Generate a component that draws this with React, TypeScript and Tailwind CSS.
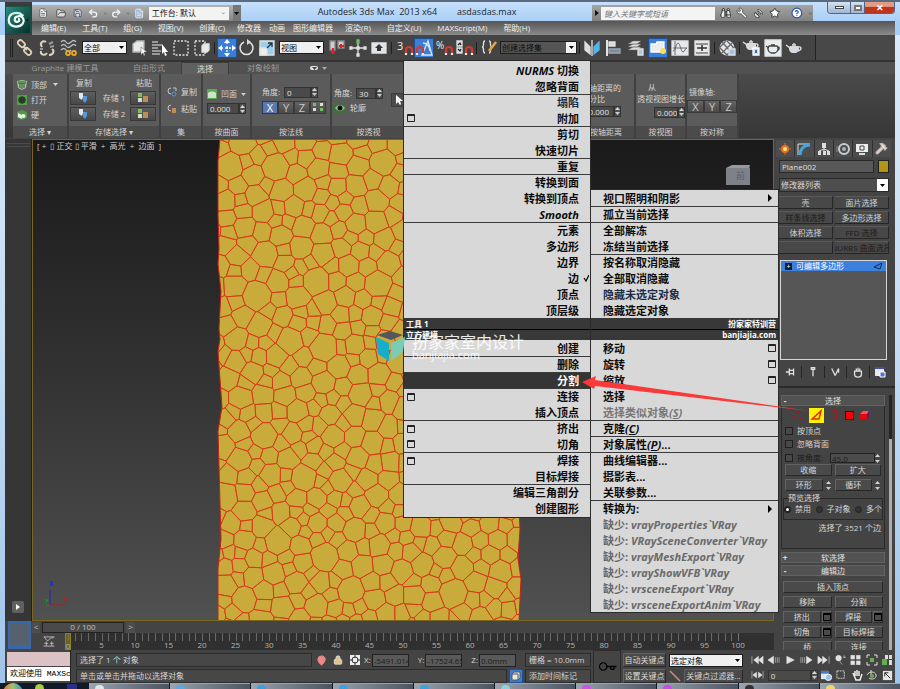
import type { ReactNode } from 'react';
import {
  Binoculars,
  ChevronDown,
  CircleHelp,
  FileText,
  FolderOpen,
  Hammer,
  Key,
  Lock,
  MapPin,
  Redo2,
  Save,
  SatelliteDish,
  Star,
  Undo2,
  Wrench,
} from 'lucide-react';

export default function App() {
  return (
    <div className="relative flex min-h-screen w-full flex-col overflow-hidden bg-linear-to-b from-[#dcebfa] via-[#c5dcf3] to-[#9fc4ea] px-[5px] font-['Open_Sans','Noto_Sans_CJK_SC',sans-serif] text-[8px] leading-none text-[#d6d6d6]">
      <Header />
      <MainToolbar />
      <Ribbon />
      <div className="flex flex-1 bg-[#444444]">
        <div className="flex min-w-0 flex-1 flex-col">
          <div className="flex flex-1">
            <aside className="flex w-[27px] flex-col items-center justify-end border-r border-[#222] bg-[#363636] pb-2">
              <div className="mt-1 mb-auto h-1 w-[23px] border-y border-[#4c4c4c]" />
              <button aria-label="展开" className="flex h-[12px] w-[12px] items-center justify-center rounded-xs bg-[#606060]">
                <svg viewBox="0 0 6 6" className="h-[6px] w-[6px]"><path d="M1 0l4 3-4 3z" fill="#fff" /></svg>
              </button>
            </aside>
            <Viewport />
          </div>
          <TrackBar />
        </div>
        <CommandPanel />
      </div>
      <StatusBar />
      <Taskbar />
      <QuadMenu />
      <Arrow />
    </div>
  );
}

/* ---------- title bar and menus ---------- */

const menus = [
  { label: '编辑(E)', wide: true },
  { label: '工具(T)', wide: true },
  { label: '组(G)', wide: true },
  { label: '视图(V)', wide: true },
  { label: '创建(C)', wide: true },
  { label: '修改器', wide: false },
  { label: '动画', wide: false },
  { label: '图形编辑器', wide: false },
  { label: '渲染(R)', wide: true },
  { label: '自定义(U)', wide: true },
  { label: 'MAXScript(M)', wide: true },
  { label: '帮助(H)', wide: true },
];

function Header() {
  return (
    <header className="-mx-[5px] flex h-[35px] border-t-2 border-[#5a6b80] bg-linear-to-b from-[#c6dffa] to-[#a9cef6] to-60% pl-[5px]">
      <div className="flex w-[27px] flex-col justify-end bg-[#3c3c3c] pb-px">
        <button aria-label="应用程序" className="relative h-[28px] w-[26px] border border-[#1d4f49] bg-linear-to-br from-[#2b8f80] to-[#07302c]">
          <svg viewBox="0 0 26 28" className="h-full w-full" fill="none">
            <path d="M18 9C13 4 3 6 3 14c0 8 11 9 15 4 3-5-1-9-5-8-4 0-5 6-1 6 2 0 3-1 2-3" stroke="#eefaf7" strokeWidth="2.4" strokeLinecap="round" />
            <path d="M6 9c4-4 10-4 13 0" stroke="#a4ded2" strokeWidth="1" />
            <path d="M21 13h4l-2 3z" fill="#05211e" />
          </svg>
        </button>
      </div>
      <div className="flex min-w-0 flex-1 flex-col">
        <div className="flex h-[19px] items-end text-[#222]">
          <div className="flex h-[16px] w-[209px] items-center gap-1 bg-linear-to-b from-[#b2b2b2] to-[#868686] pl-[6px] text-[#f5f5f5]">
            <FileText className="h-[10px] w-[11px] fill-white text-[#555]" />
            <FolderOpen className="ml-[4px] h-[11px] w-[11px] fill-[#ddd] text-[#444]" />
            <Save className="ml-[2px] h-[10px] w-[10px] fill-[#ddd] text-[#344d77]" />
            <Undo2 className="ml-[2px] h-[11px] w-[11px]" strokeWidth={3} />
            <ChevronDown className="h-[5px] w-[5px] text-[#333]" />
            <Redo2 className="h-[11px] w-[11px]" strokeWidth={3} />
            <ChevronDown className="h-[5px] w-[5px] text-[#333]" />
            <FileText className="h-[11px] w-[11px] fill-[#9cb5d8] text-[#eee]" />
            <label className="ml-auto flex h-[13px] w-[84px] items-center bg-[#f3f3f3] px-[3px] text-[#111]">
              <select aria-label="工作台" className="w-full appearance-none bg-transparent">
                <option>工作台: 默认</option>
              </select>
              <ChevronDown className="h-[5px] w-[5px]" />
            </label>
            <div className="flex h-full w-[9px] items-center justify-center bg-[#777]"><Caret className="text-black" /></div>
          </div>
          <div className="flex flex-1 justify-center gap-[20px] self-center whitespace-pre pl-[1px] text-[9px] text-[#1b2733]">
            <span>Autodesk 3ds Max  2013 x64</span>
            <span>asdasdas.max</span>
          </div>
          <div className="flex h-[16px] w-[221px] items-center gap-[5px] bg-linear-to-b from-[#a4a4a4] to-[#828282] pl-[3px] text-[#f6f6f6]">
            <svg viewBox="0 0 4 6" className="mr-[-3px] h-[6px] w-[4px]"><path d="M0 0l4 3-4 3z" fill="#111" /></svg>
            <input aria-label="搜索" placeholder="键入关键字或短语" className="h-[13px] w-[117px] bg-[#f4f4f4] pl-[3px] italic placeholder:text-[#777]" />
            <Binoculars className="h-[12px] w-[12px] text-[#333]" fill="#eee" />
            <Wrench className="h-[12px] w-[12px] -scale-x-100 fill-white text-[#555]" />
            <SatelliteDish className="h-[11px] w-[11px] fill-white text-[#333]" />
            <Star className="h-[12px] w-[12px] fill-white text-[#333]" />
            <CircleHelp className="ml-[6px] h-[12px] w-[12px] fill-white text-[#2c55a8]" strokeWidth={2.5} />
            <ChevronDown className="h-[5px] w-[5px] text-[#222]" />
          </div>
          <div className="ml-[14px] mr-[5px] flex h-[12px] self-start overflow-hidden rounded-b-sm border border-t-0 border-[#51657f]">
            <button aria-label="最小化" className="flex w-[23px] items-center justify-center border-r border-[#51657f] bg-linear-to-b from-[#d5e2f0] to-[#9fb7d2]">
              <span className="h-[3px] w-[9px] border border-[#444] bg-white" />
            </button>
            <button aria-label="还原" className="flex w-[14px] items-center justify-center border-r border-[#51657f] bg-linear-to-b from-[#d5e2f0] to-[#9fb7d2]">
              <span className="h-[6px] w-[8px] border-2 border-[#777] bg-white" />
            </button>
            <button aria-label="关闭" className="flex w-[29px] items-center justify-center bg-linear-to-b from-[#e39a86] from-40% to-[#c0341b] to-50% text-[9px] font-bold text-white">
              ✕
            </button>
          </div>
        </div>
        <nav className="mr-[5px] flex h-[14px] items-center bg-linear-to-b from-[#555] to-[#8b8b8b] pl-px text-[#f0f0f0]">
          {menus.map((m) => (
            <button key={m.label} className={m.wide ? 'px-2 whitespace-nowrap' : 'px-1 whitespace-nowrap'}>
              {m.label}
            </button>
          ))}
        </nav>
      </div>
    </header>
  );
}

function Caret({ className = 'text-[#ccc]' }: { className?: string }) {
  return (
    <svg viewBox="0 0 5 3" className={`h-[3px] w-[5px] shrink-0 ${className}`}>
      <path d="M0 0h5L2.5 3z" fill="currentColor" />
    </svg>
  );
}

/* ---------- main toolbar ---------- */

function Tool({ label, active, children }: { label: string; active?: boolean; children: ReactNode }) {
  return (
    <button
      aria-label={label}
      className={
        active
          ? 'flex h-[20px] w-[20px] shrink-0 items-center justify-center border border-[#1f4f8d] bg-[#3b7ed6]'
          : 'flex h-[20px] w-[20px] shrink-0 items-center justify-center'
      }
    >
      <svg viewBox="0 0 18 18" className="h-[18px] w-[18px] overflow-visible" fill="none" stroke="#e2e2e2" strokeWidth="1.3">
        {children}
      </svg>
    </button>
  );
}

function Divider() {
  return <div className="mx-[2px] h-[12px] w-px shrink-0 bg-[#1f1f1f]" />;
}

function Magnet() {
  return (
    <g strokeWidth="2.2">
      <path d="M11 14v-3a3 3 0 016 0v3" stroke="#cf3b32" />
      <path d="M11 14v2M17 14v2" stroke="#f0f0f0" />
    </g>
  );
}

function Teapot() {
  return (
    <>
      <path d="M5 7h8c2 2 1 6-2 7H7C4 13 3 9 5 7z" fill="#d5dbe0" stroke="none" />
      <path d="M5 9L1 6M13 8c4-1 4 3 0 4M7 6h4M9 4v2" />
    </>
  );
}

function MainToolbar() {
  return (
    <div className="flex h-[25px] items-center bg-[#444] pl-[5px]">
      <div className="mr-[2px] h-[18px] w-[3px] border-x border-[#222]" />
      <div className="flex gap-[2px]">
        <Tool label="选择并链接">
          <rect x="1" y="2" width="8" height="5" rx="2.5" transform="rotate(45 5 5)" stroke="#ddd3b8" strokeWidth="1.8" />
          <rect x="8" y="10" width="8" height="5" rx="2.5" transform="rotate(45 12 12)" stroke="#ddd3b8" strokeWidth="1.8" />
          <path d="M7 7l4 4" stroke="#ddd3b8" strokeWidth="2" />
        </Tool>
        <Tool label="取消链接">
          <path d="M8 3C5 1 1 4 4 8M3 12c-1 4 4 5 6 2M14 10c3 2 1 6-3 6" stroke="#ddd3b8" strokeWidth="2" />
          <path d="M11 5l4-2M12 8l4-1M2 10h3" stroke="#999" strokeWidth="2" />
        </Tool>
        <Tool label="绑定到空间扭曲">
          <path d="M1 3q3-3 5 0t5 0 5 0M1 7q3-3 5 0t5 0 5 0M1 11q3-3 5 0t5 0" stroke="#b9bfc2" />
          <path d="M6 14a2 2 0 104 0 2 2 0 10-4 0M12 14a2 2 0 104 0 2 2 0 10-4 0" stroke="#e5ac21" strokeWidth="1.8" />
        </Tool>
      </div>
      <Combo label="选择过滤器" value="全部" className="ml-[3px] w-[45px]" />
      <div className="ml-[2px] flex gap-[1px]">
        <Tool label="选择对象">
          <path d="M3 5l4-3h7v8l-4 3H3z" fill="#e8e8e8" stroke="#aeb9be" />
          <path d="M11 8v8l2-2 1 3 1-1-1-3h3z" fill="#fff" stroke="#555" strokeWidth=".5" />
        </Tool>
        <Tool label="按名称选择">
          <path d="M1 3h6M1 6h10M1 9h6M1 12h9M1 15h8" stroke="#b5b5b5" />
          <path d="M11 5v10l2-2 1 4 2-1-2-3h3z" fill="#fff" stroke="none" />
        </Tool>
        <Tool label="矩形选择区域"><path d="M2 2h14v14H2z" strokeDasharray="2 1.5" /></Tool>
        <Tool label="窗口/交叉">
          <path d="M2 2h10v14H2z" strokeDasharray="2 1.5" />
          <path d="M9 7l2-2h5v6l-2 2H9z" fill="#e8e8e8" />
        </Tool>
      </div>
      <Divider />
      <Tool label="选择并移动" active>
        <path d="M9 3v12M3 9h12" stroke="#fff" strokeDasharray="2 2" />
        <path d="M9 0l3 4H6zM9 18l3-4H6zM0 9l4-3v6zM18 9l-4-3v6z" fill="#fff" stroke="none" />
        <path d="M8 8h2v2H8z" fill="#fff" stroke="none" />
      </Tool>
      <Tool label="选择并旋转">
        <path d="M11 3a6.5 6.5 0 11-5 0" strokeWidth="1.6" /><path d="M9 0v6l4-3z" fill="#ddd" stroke="none" />
      </Tool>
      <Tool label="选择并缩放">
        <path d="M2 2h14v14H2z" fill="#9dd0e8" /><path d="M2 9h7v7H2z" fill="#eee" /><path d="M9 9l5-5M10 4h4v4" stroke="#234" />
      </Tool>
      <Combo label="参考坐标系" value="视图" className="ml-[2px] w-[45px]" />
      <div className="ml-[3px] flex gap-[1px]">
        <Tool label="使用轴点中心">
          <path d="M2 2h5v9H2zM10 2h6v7h-6z" fill="#c9ced2" stroke="#888" /><path d="M5 9v6M3 13h4" stroke="#d22" strokeWidth="2" /><path d="M11 7h5M13 5v4" stroke="#d22" strokeWidth="2" />
        </Tool>
        <Tool label="选择并操纵">
          <path d="M9 3v12M3 9h12" /><path d="M8 8h2v2H8z" fill="#ddd" /><path d="M8 1h2v3H8z" fill="#6fc05e" stroke="#6fc05e" /><path d="M1 8h2v2H1zM15 8h2v2h-2zM8 15h2v2H8z" fill="#ddd" />
        </Tool>
        <Tool label="键盘快捷键覆盖">
          <path d="M2 4h14v10H2z" fill="#dfe5e8" /><path d="M9 5l4 4h-2v3H7V9H5z" fill="#333" stroke="none" />
        </Tool>
      </div>
      <Divider />
      <Tool label="捕捉开关"><text x="2" y="11" fill="#eee" stroke="none" fontSize="11">3</text><Magnet /></Tool>
      <Tool label="角度捕捉切换" active><path d="M7 16L13 2l4 14zM8 4c4 0 7 4 7 8" stroke="#d8e8ff" /><g transform="translate(-9 0)"><Magnet /></g></Tool>
      <Tool label="百分比捕捉切换"><text x="1" y="10" fill="#eee" stroke="none" fontSize="10">%</text><Magnet /></Tool>
      <Tool label="微调器捕捉切换"><path d="M2 2h5v5H2zM2 9h5v5H2z" fill="#ddd" /><path d="M3 6l2-2 1 2M3 10l2 2 1-2" stroke="#222" /><Magnet /></Tool>
      <Divider />
      <Tool label="编辑命名选择集">
        <path d="M5 2C2 2 5 8 2 8c3 0 0 6 3 6M9 2c3 0 0 6 3 6-3 0 0 6-3 6" /><path d="M9 12l7-9" stroke="#e8a33a" strokeWidth="2.5" />
      </Tool>
      <Combo label="命名选择集" value="创建选择集" className="ml-[1px] w-[77px]" dark />
      <Divider />
      <div className="flex gap-[2px]">
        <Tool label="镜像"><path d="M2 3l5 5v7l-5-4zM9 1v16" fill="#ddd" /><path d="M16 3l-5 5v7l5-4z" fill="#54b5ea" stroke="#54b5ea" /></Tool>
        <Tool label="对齐"><path d="M2 1v16" strokeWidth="2" /><path d="M4 3h6v4H4z" fill="#ddd" /><path d="M4 10h11v4H4z" fill="#7d8a9a" stroke="#9aa7b5" /></Tool>
        <Tool label="层管理器"><path d="M1 11l5-3h8l-4 3zM1 8l5-3h8l-4 3zM1 5l5-3h8l-4 3z" fill="#ddd" stroke="#666" strokeWidth=".5" /><path d="M11 10h5v6h-5z" fill="#a8c8e8" /></Tool>
        <Tool label="切换功能区" active><path d="M2 5h5l1-2h7v10H2z" fill="#e8edf2" stroke="#fff" /><circle cx="14" cy="12" r="3" fill="#ffdc5c" stroke="none" /></Tool>
        <Tool label="曲线编辑器"><path d="M1 2h16v14H1z" fill="#e5e9eb" /><path d="M2 12c3 0 3-8 5-8s3 9 5 9 2-4 4-4M4 2v14M2 9h14" stroke="#4a5154" strokeWidth=".8" /></Tool>
        <Tool label="图解视图"><path d="M2 2h14v14H2z" fill="#e5e9eb" /><path d="M3 5h12M3 14h12" stroke="#777" /><path d="M4 9h10M9 6v6M8 9h2" stroke="#333" strokeWidth="1.6" /></Tool>
      </div>
      <Divider />
      <Tool label="材质编辑器">
        <circle cx="9" cy="9" r="7.5" fill="#dfe5e8" stroke="none" /><path d="M4 3l10 11M1 8l8 8M9 2l7 7M14 4L4 14M9 16l7-8M2 8l6-6" stroke="#666" /><path d="M11 10h6v6h-6z" fill="#9dc3e5" />
      </Tool>
      <Divider />
      <div className="flex gap-[1px]">
        <Tool label="渲染设置"><g transform="translate(-1 -3)"><Teapot /></g><path d="M10 9h6v7h-6z" fill="#cde" stroke="#fff" /><path d="M12 11h2v3h-2z" fill="#3671b5" stroke="none" /></Tool>
        <Tool label="渲染帧窗口"><path d="M1 1h16v16H1z" fill="#e8ecee" /><path d="M5 7h8c2 2 1 6-2 7H7C4 13 3 9 5 7zM5 9L2 7M13 8c3-1 3 3 0 4M7 6h4" stroke="#444" /></Tool>
        <Tool label="渲染产品"><Teapot /></Tool>
      </div>
      <div className="ml-auto h-full w-[80px] border-l border-[#222] bg-[#484848]" />
    </div>
  );
}

function Combo({ label, value, className, dark }: { label: string; value: string; className: string; dark?: boolean }) {
  return (
    <div className={`flex h-[13px] shrink-0 items-center border border-[#1c1c1c] ${dark ? 'bg-[#555]' : 'bg-[#efefef]'} ${className}`}>
      <select aria-label={label} className="h-full min-w-0 flex-1 appearance-none pl-[1px] leading-[11px] text-[#0c0c0c]">
        <option>{value}</option>
      </select>
      <span className="flex h-full w-[10px] items-center justify-center bg-[#f2f2f2]"><Caret className="text-black" /></span>
    </div>
  );
}

/* ---------- ribbon ---------- */

function Spinner({ label, value, className = 'w-[36px]' }: { label: string; value: string; className?: string }) {
  return (
    <span className={`flex h-[11px] items-center ${className}`}>
      <input aria-label={label} defaultValue={value} className="h-full min-w-0 flex-1 border border-[#333] bg-[#4a4a4a] pl-[2px] text-[#e0e0e0]" />
      <span className="flex h-full w-[7px] flex-col items-center justify-center gap-[2px] border border-[#333] bg-[#505050]">
        <Caret className="rotate-180" />
        <Caret />
      </span>
    </span>
  );
}

function Group({ title, className, children }: { title: string; className: string; children?: ReactNode }) {
  return (
    <section className={`flex shrink-0 flex-col border-r-2 border-[#404040] bg-[#5b5b5b] ${className}`}>
      <div className="flex flex-1 flex-col">{children}</div>
      <h3 className="flex h-[12px] items-center justify-center gap-[5px] bg-[#4b4b4b] text-[#d2d2d2]">{title}</h3>
    </section>
  );
}

function GreenIcon({ kind }: { kind: 'top' | 'open' | 'hard' | 'concave' }) {
  return (
    <svg viewBox="0 0 10 10" className="h-[10px] w-[10px] shrink-0">
      {kind === 'top' && <><path d="M0 1l5-1 5 1-1 7-4 2-4-2z" fill="#a9bda6" /><path d="M1 1h8v3H1z" fill="#4ea045" /><path d="M3 3v5M5 3v6M7 3v5" stroke="#345431" /></>}
      {kind === 'open' && <><path d="M0 0h10v10H0z" fill="#54a04b" /><circle cx="5" cy="5" r="3.3" fill="#333" stroke="#1e4a1a" /></>}
      {kind === 'hard' && <><path d="M0 2l5-2 5 2v6l-5 2-5-2z" fill="#4e9a46" /><path d="M1 3l4 2v4L1 7z" fill="#e4eee2" /><circle cx="6.5" cy="6" r="2" fill="#f1f6f0" /></>}
      {kind === 'concave' && <><path d="M0 0h10v10H0z" fill="#57aa4d" /><path d="M1 4c2-2 6-2 8 0v5H1z" fill="#cfe3cb" /></>}
    </svg>
  );
}

function StoreButton({ label, paste }: { label: string; paste?: boolean }) {
  return (
    <button aria-label={label} className="flex h-[14px] w-[26px] items-center justify-center border border-[#383838] bg-linear-to-b from-[#5e5e5e] to-[#484848]">
      <svg viewBox="0 0 12 10" className="h-[10px] w-[12px]">
        {paste ? (
          <><path d="M1 0h4v4H1z" fill="#7fbf5c" /><path d="M1 5h4v4H1z" fill="#d2dccf" /><path d="M6 3h5v6H6z" fill="#c28a54" /></>
        ) : (
          <><path d="M2 0h4v4l-1 3-3-2z" fill="#dfe9f2" /><path d="M6 3h4v4l-2 3-2-2z" fill="#4e98db" /></>
        )}
      </svg>
    </button>
  );
}

const axisButton = 'h-[13px] flex-1 border border-[#3a3a3a] bg-linear-to-b from-[#646464] to-[#4a4a4a] text-[11px] leading-[11px] text-[#c8c8c8]';

function Ribbon() {
  return (
    <div className="border-t-2 border-[#333] bg-[#444] pb-px">
      <div role="tablist" className="flex h-[12px] items-center bg-[#515151] text-[#9c9c9c]">
        <button role="tab" className="ml-[7px] w-[106px]">Graphite 建模工具</button>
        <button role="tab" className="ml-[4px] w-[54px]">自由形式</button>
        <button role="tab" aria-selected="true" className="ml-[5px] h-full w-[48px] border border-b-0 border-[#3d3d3d] bg-[#606060] text-[#dcdcdc]">选择</button>
        <button role="tab" className="w-[68px]">对象绘制</button>
        <span className="ml-[13px] flex h-[4px] w-[8px] items-center justify-center rounded-xs bg-[#e5e5e5] text-[#333]"><Caret className="text-[#444]" /></span>
        <Caret className="ml-[4px] text-[#aaa]" />
      </div>
      <div className="flex h-[64px] bg-linear-to-b from-[#4a4a4a] to-[#373737] pl-[8px]">
        <Group title="选择 ▾" className="w-[56px]">
          <div className="flex flex-1 flex-col justify-around py-[3px] pl-[4px]">
            <span className="flex items-center gap-[4px]"><GreenIcon kind="top" />顶部<Caret className="ml-[2px]" /></span>
            <span className="flex items-center gap-[4px]"><GreenIcon kind="open" />打开</span>
            <span className="flex items-center gap-[4px]"><GreenIcon kind="hard" />硬</span>
          </div>
        </Group>
        <Group title="存储选择 ▾" className="w-[92px]">
          <div className="grid flex-1 grid-cols-[28px_1fr_28px] content-center items-center gap-y-[2px] px-[1px] text-center">
            <span className="pb-[2px]">复制</span><span /><span className="pb-[2px]">粘贴</span>
            <StoreButton label="复制存储 1" /><span>存储 1</span><StoreButton label="粘贴存储 1" paste />
            <StoreButton label="复制存储 2" /><span>存储 2</span><StoreButton label="粘贴存储 2" paste />
          </div>
        </Group>
        <Group title="集" className="w-[42px]">
          <div className="flex flex-1 flex-col justify-center gap-[7px] pl-[6px]">
            <span className="flex items-center gap-[4px]">
              <svg viewBox="0 0 10 10" className="h-[10px] w-[10px]" fill="none"><path d="M4 7a3 3 0 110-6M6 1h3v3" stroke="#c9c9c9" /><circle cx="7" cy="7" r="2" stroke="#4e98db" /></svg>复制
            </span>
            <span className="flex items-center gap-[4px]">
              <svg viewBox="0 0 10 10" className="h-[10px] w-[10px]" fill="none"><path d="M4 7a3 3 0 110-6" stroke="#c9c9c9" /><path d="M5 4h4v5H5z" fill="#c28a54" /></svg>粘贴
            </span>
          </div>
        </Group>
        <Group title="按曲面" className="w-[49px]">
          <div className="flex flex-1 flex-col justify-center gap-[4px] px-[4px] pt-[3px]">
            <span className="flex items-center gap-[4px] whitespace-nowrap"><GreenIcon kind="concave" />凹面<Caret /></span>
            <Spinner label="凹面" value="0.000" className="w-[39px]" />
          </div>
        </Group>
        <Group title="按法线" className="w-[80px]">
          <div className="flex flex-1 flex-col justify-center gap-[3px] px-[10px]">
            <span className="flex items-center gap-[4px] whitespace-nowrap">角度:<Spinner label="法线角度" value="0" className="w-[34px]" /></span>
            <div className="flex w-[64px]">
              <button className="h-[13px] flex-1 border border-[#223a60] bg-[#5b79ad] text-[11px] leading-[11px] text-white">X</button>
              <button className={axisButton}>Y</button>
              <button className={axisButton}>Z</button>
              <button aria-label="反转" className={axisButton}>
                <svg viewBox="0 0 12 10" className="m-auto h-[10px] w-[12px]" fill="#ddd"><path d="M1 1h3v3H1zM8 6h3v3H8z" fill="#77c063" /><path d="M8 1h3v3H8zM1 6h3v3H1z" /></svg>
              </button>
            </div>
          </div>
        </Group>
        <Group title="按透视" className="w-[75px]">
          <div className="flex flex-1 flex-row items-center justify-between pl-[2px]">
            <div className="flex flex-col gap-[4px]">
              <span className="flex items-center gap-[4px] whitespace-nowrap">角度:<Spinner label="透视角度" value="30" className="w-[27px]" /></span>
              <span className="flex items-center gap-[4px]">
                <svg viewBox="0 0 12 10" className="h-[10px] w-[12px]"><path d="M0 0h12v10H0z" fill="#3f7038" /><path d="M1 5c3-4 7-4 10 0-3 4-7 4-10 0z" fill="#a6b8a3" /><circle cx="6" cy="5" r="2.5" fill="#111" /></svg>
                轮廓
              </span>
            </div>
            <button aria-label="选择" className="h-[14px] w-[14px] border border-[#3a3a3a] bg-[#4d4d4d]">
              <svg viewBox="0 0 12 12" className="h-[12px] w-[12px]"><path d="M4 1v9l2-2 2 3 1-1-1-3h3z" fill="#fff" /></svg>
            </button>
          </div>
        </Group>
        <Group title="按随机" className="w-[171px]" />
        <Group title="按轴距离" className="w-[58px]">
          <div className="flex flex-1 flex-col justify-center gap-[3px] whitespace-nowrap pl-[3px]">
            <span>离轴距离的</span>
            <span>百分比</span>
            <Spinner label="百分比" value="10.000" className="w-[40px]" />
          </div>
        </Group>
        <Group title="按视图" className="w-[51px]">
          <div className="flex flex-1 flex-col justify-center gap-[4px] whitespace-nowrap">
            <span className="pl-[12px]">从</span>
            <span className="pl-[1px]">透视视图增长</span>
            <Spinner label="视图增长" value="0.000" className="ml-auto w-[31px]" />
          </div>
        </Group>
        <Group title="按对称" className="w-[52px]">
          <div className="flex flex-1 flex-col justify-center gap-[4px]">
            <span className="pl-[2px]">镜像轴:</span>
            <div className="flex">
              <button className={axisButton}>X</button>
              <button className={axisButton}>Y</button>
              <button className={axisButton}>Z</button>
            </div>
          </div>
        </Group>
      </div>
    </div>
  );
}

/* ---------- viewport ---------- */

type Point = [number, number];

interface Seed {
  x: number;
  y: number;
  r: number;
}

const MESH_W = 304;
const MESH_H = 482;

function seededRandom(seed: number) {
  let s = seed;
  return () => {
    s = (s * 16807) % 2147483647;
    return s / 2147483647;
  };
}

// pack circles of falling size, the large ones first
function packSeeds(): Seed[] {
  const rand = seededRandom(3521);
  const seeds: Seed[] = [];
  for (let i = 0; i < 22000; i++) {
    const x = rand() * (MESH_W + 60) - 30;
    const y = rand() * (MESH_H + 60) - 30;
    let r = 4 + rand();
    if (i < 60) r = 11 + rand() * 2;
    else if (i < 1200) r = 8 + rand() * 2;
    else if (i < 8000) r = 6 + rand() * 2;
    if (seeds.every((p) => Math.hypot(p.x - x, p.y - y) > p.r + r)) seeds.push({ x, y, r });
  }
  return seeds;
}

// power diagram cell: clip a box by the radical line of every near neighbour
function cellOf(site: Seed, sites: Seed[]): Point[] {
  const { x, y, r } = site;
  let cell: Point[] = [[x - 30, y - 30], [x + 30, y - 30], [x + 30, y + 30], [x - 30, y + 30]];
  for (const other of sites) {
    const dx = other.x - x;
    const dy = other.y - y;
    if (other === site || Math.abs(dx) > 50 || Math.abs(dy) > 50) continue;
    const offset = (dx * dx + dy * dy + r * r - other.r * other.r) / 2;
    const side = (p: Point) => (p[0] - x) * dx + (p[1] - y) * dy - offset;
    const next: Point[] = [];
    cell.forEach((a, i) => {
      const b = cell[(i + 1) % cell.length];
      const da = side(a);
      const db = side(b);
      if (da <= 0) next.push(a);
      if (da * db < 0) {
        const t = da / (da - db);
        next.push([a[0] + (b[0] - a[0]) * t, a[1] + (b[1] - a[1]) * t]);
      }
    });
    cell = next;
  }
  return cell;
}

function relax(seeds: Seed[]): Seed[] {
  return seeds.map((s) => {
    const cell = cellOf(s, seeds);
    let area = 0;
    let cx = 0;
    let cy = 0;
    cell.forEach((a, i) => {
      const b = cell[(i + 1) % cell.length];
      const cross = a[0] * b[1] - b[0] * a[1];
      area += cross;
      cx += (a[0] + b[0]) * cross;
      cy += (a[1] + b[1]) * cross;
    });
    return area === 0 ? s : { x: cx / (3 * area), y: cy / (3 * area), r: s.r };
  });
}

const seeds = relax(relax(relax(packSeeds())));
const cells = seeds.map((s) => cellOf(s, seeds).map((p) => p.map((n) => n.toFixed(1)).join(',')).join(' '));

const MESH_OUTLINE =
  'M3 0L1 22L1 75L2 110L1 125L4 152L2 190L3 200L1 212L5 268L1 292L4 400L1 430L1 482H302L304 440L301 420L303 390L301 350V0Z';

function Viewport() {
  return (
    <main className="relative flex-1 overflow-hidden border border-[#7c651d] bg-linear-to-b from-[#1a1a1a] via-[#333] to-[#515151]">
      <span className="absolute left-[4px] top-[2px] whitespace-pre text-[#d0d0d0]">{'[ +  ▯ 正交 ▯ 平滑  +  高光  +  边面  ]'}</span>
      <svg
        viewBox={`0 0 ${MESH_W} ${MESH_H}`}
        preserveAspectRatio="xMidYMid slice"
        className="absolute left-[184px] top-0 h-full w-[304px]"
      >
        <clipPath id="mesh"><path d={MESH_OUTLINE} /></clipPath>
        <g clipPath="url(#mesh)" fill="#c8ab3a" stroke="#d8391a" strokeWidth="1" strokeLinejoin="round">
          {cells.map((points, i) => <polygon key={i} points={points} />)}
        </g>
        <path d={MESH_OUTLINE} fill="none" stroke="#c0241a" />
      </svg>
      <svg viewBox="0 0 28 30" className="absolute bottom-[12px] left-[10px] h-[30px] w-[28px]" fill="none">
        <path d="M7 27V12" stroke="#2424a8" /><path d="M7 27h15" stroke="#a52222" /><path d="M7 27l-4 1" stroke="#1b8a1b" />
        <path d="M7 4h3l-3 3h3" stroke="#2424c8" /><path d="M21 20l3 4M24 20l-3 4" stroke="#b52222" /><path d="M2 21l2 2 1-2M4 23l-1 2" stroke="#1b9a1b" />
      </svg>
      <svg viewBox="0 0 26 22" className="absolute right-[22px] top-[24px] h-[22px] w-[26px]">
        <path d="M1 4l6-3h18l-1 4z" fill="#96999f" /><path d="M1 4h24v17H1z" fill="#7e8188" />
        <text x="11" y="15" fontSize="9" fill="#5b5e65">前</text>
      </svg>
    </main>
  );
}

function TrackBar() {
  return (
    <div className="flex h-[29px] shrink-0">
      <div className="w-[27px] shrink-0 pl-[3px]">
        <button aria-label="视口布局" className="h-[28px] w-[23px] border-2 border-b-4 border-[#3768ab] bg-[#56616f]" />
      </div>
      <div className="flex min-w-0 flex-1 flex-col">
        <div className="flex h-[12px] items-center gap-[2px] text-[#c0c0c0]">
          <button className="h-[11px] w-[8px] bg-[#4d4d4d]">&lt;</button>
          <button className="h-[11px] w-[82px] border border-[#222] bg-[#4a4a4a]">0 / 100</button>
          <button className="h-[11px] w-[9px] bg-[#4d4d4d]">&gt;</button>
        </div>
        <div className="flex flex-1">
          <div className="flex w-[33px] items-center justify-center">
            <svg viewBox="0 0 12 12" className="h-[11px] w-[12px]" fill="none" stroke="#bbb"><path d="M0 1h12M0 11h12M1 1q3 6 5 3t5-2M3 6v5M9 6v5M1 8h4M7 8h4" /></svg>
          </div>
          <div className="flex flex-1 bg-[#303030] pl-[3px]">
            {Array.from({ length: 21 }, (_, i) => (
              <div key={i} className={i < 20 ? 'min-w-0 flex-1' : 'w-[36px]'}>
                <div className={i < 20 ? 'grid h-[8px] grid-cols-5' : 'h-[8px] border-l border-[#777]'}>
                  {i < 20 && [0, 1, 2, 3, 4].map((t) => <span key={t} className="border-l border-[#686868]" />)}
                </div>
                <div className="flex w-0 justify-center text-[#b4b4b4]">
                  {i === 0 ? <span className="-mt-[8px] h-[17px] border border-[#8d8420] bg-[#8d8420]/60 pt-[8px]">0</span> : <span>{i * 5}</span>}
                </div>
              </div>
            ))}
          </div>
        </div>
      </div>
    </div>
  );
}

/* ---------- command panel ---------- */

const setButton = 'flex h-[13px] items-center justify-center overflow-hidden whitespace-nowrap border-r border-b border-[#262626] border-t border-t-[#5a5a5a] bg-[#484848]';
const modifierSets = [
  { name: '壳', off: false },
  { name: '面片选择', off: false },
  { name: '样条线选择', off: true },
  { name: '多边形选择', off: false },
  { name: '体积选择', off: false },
  { name: 'FFD 选择', off: true },
  { name: '', off: true },
  { name: 'NURBS 曲面选择', off: true },
];

function PanelIcon({ label, children }: { label: string; children: ReactNode }) {
  return (
    <button aria-label={label} className="flex h-[17px] flex-1 items-center justify-center border-r border-[#303030] bg-[#4d4d4d]">
      <svg viewBox="0 0 14 14" className="h-[14px] w-[14px]" fill="none">{children}</svg>
    </button>
  );
}

function CommandPanel() {
  return (
    <aside className="ml-[2px] flex w-[119px] shrink-0 flex-col bg-[#444]">
      <div className="mr-[4px] mt-px flex">
        <PanelIcon label="创建"><circle cx="7" cy="7" r="4" fill="#e8701c" /><circle cx="7" cy="7" r="2" fill="#ffe58a" /><path d="M7 1v2M7 11v2M1 7h2M11 7h2" stroke="#e8701c" /></PanelIcon>
        <PanelIcon label="修改"><path d="M1 13V2h12" stroke="#ddd" /><path d="M3 13C3 7 7 3 13 3" stroke="#48a4dd" strokeWidth="3" /></PanelIcon>
        <PanelIcon label="层次"><path d="M5 1h4v5H5zM1 9h3v4H1zM6 9h3v4H6zM10 9h3v4h-3z" fill="#ddd" /><path d="M7 6v3M2 9l5-2 5 2" stroke="#ddd" /></PanelIcon>
        <PanelIcon label="运动"><circle cx="8" cy="7" r="5" stroke="#ccc" strokeWidth="2" /><circle cx="8" cy="7" r="2" fill="#9cb4c8" /><path d="M1 4v6" stroke="#888" /></PanelIcon>
        <PanelIcon label="显示"><path d="M1 2h12v8H1z" fill="#eee" /><path d="M4 12h6" stroke="#ddd" strokeWidth="2" /><path d="M5 4h4v4H5z" stroke="#444" /></PanelIcon>
        <button aria-label="工具" className="flex h-[17px] flex-1 items-center justify-center bg-[#4d4d4d]"><Hammer className="h-[13px] w-[13px] fill-[#ddd] text-[#c9b4ae]" /></button>
      </div>
      <div className="mt-[3px] flex gap-[4px] pl-[3px]">
        <input aria-label="名称" defaultValue="Plane002" className="h-[13px] w-[95px] border border-[#2a2a2a] bg-[#585858] pl-[2px] text-[#dedede]" />
        <button aria-label="颜色" className="h-[13px] w-[11px] border border-[#222] bg-[#b39417]" />
      </div>
      <div className="ml-[3px] mt-[5px] flex h-[14px] w-[110px] border border-[#2a2a2a] bg-[#4e4e4e]">
        <select aria-label="修改器列表" className="min-w-0 flex-1 appearance-none pl-[1px] leading-[12px]"><option>修改器列表</option></select>
        <span className="flex w-[11px] items-center justify-center bg-white"><Caret className="text-black" /></span>
      </div>
      <div className="mr-[6px] mt-[4px] grid grid-cols-2 gap-[2px] pl-[3px]">
        {modifierSets.map((s) => (
          <button key={s.name} aria-label={s.name || '空'} className={`${setButton} ${s.off ? 'text-[#1c1c1c]' : 'text-[#d0d0d0]'}`}>{s.name}</button>
        ))}
      </div>
      <div className="ml-[4px] mt-[6px] h-[100px] w-[107px] shrink-0 border border-[#d5d5d5] bg-[#565656]">
        <div className="flex h-[10px] items-center bg-[#3c80de] pl-[4px] text-white">
          <span className="mr-[4px] flex h-[7px] w-[7px] items-center justify-center bg-[#0a1b38] text-[7px]">+</span>可编辑多边形
          <svg viewBox="0 0 10 8" className="ml-auto mr-[3px] h-[8px] w-[10px]" fill="none"><path d="M1 5l8-4-2 6z" stroke="#0f2a55" /></svg>
        </div>
      </div>
      <div className="mx-[4px] mt-[4px] flex h-[15px] items-center justify-between border-[#222] text-[#e0e0e0]">
        {['M1 7h4M5 3v8M5 5h5v4H5M10 3v8', 'M5 2h4v2H5zM7 3v9', 'M2 3l4 8M6 11l4-8M10 3v5', 'M3 6h8v4a4 3 0 01-8 0zM5 6V3M7 6V2M9 6V3'].map((d) => (
          <button key={d} aria-label="堆栈工具" className="flex flex-1 justify-center border-r border-[#252525]">
            <svg viewBox="0 0 14 14" className="h-[12px] w-[12px]" fill="none" stroke="#e0e0e0" strokeWidth="1.5"><path d={d} /></svg>
          </button>
        ))}
        <button aria-label="配置修改器集" className="flex flex-1 justify-center">
          <svg viewBox="0 0 12 12" className="h-[12px] w-[12px]"><path d="M1 1h9v9H1z" fill="#e8e8f4" /><path d="M1 1h9v2H1z" fill="#3d52ae" /><path d="M6 6h5v5H6z" fill="#5671ce" stroke="#fff" /></svg>
        </button>
      </div>
      <div className="mt-[7px] flex h-0 grow border-t-2 border-[#2a2a2a] pt-[7px]">
        <div className="ml-[3px] flex w-[108px] flex-col overflow-hidden">
          <Rollout title="选择" sign="-" />
          <SelectionRollout />
          <Rollout title="软选择" sign="+" />
          <div className="h-[2px] shrink-0" />
          <Rollout title="编辑边" sign="-" />
          <EditEdgesRollout />
        </div>
        <div className="ml-[2px] flex w-[3px] flex-col bg-[#252525] pt-[44px]"><div className="flex-1 bg-[#adadad]" /></div>
      </div>
    </aside>
  );
}

function Rollout({ title, sign }: { title: string; sign: string }) {
  return (
    <button className="mx-[2px] flex h-[11px] shrink-0 items-center justify-center border border-[#626262] bg-[#525252] text-[#e0e0e0]">
      <span className="w-[6px] font-bold">{sign}</span>
      <span className="flex-1 pr-[6px]">{title}</span>
    </button>
  );
}

const smallButton = 'h-[12px] border border-t-[#626262] border-l-[#626262] border-r-[#282828] border-b-[#282828] bg-[#4a4a4a] text-[#d8d8d8]';

function Check({ label, disabled }: { label: string; disabled?: boolean }) {
  return (
    <label className={disabled ? 'flex items-center gap-[4px] text-[#1c1c1c]' : 'flex items-center gap-[4px]'}>
      <input type="checkbox" disabled={disabled} className="h-[8px] w-[8px] appearance-none border border-[#1f1f1f] bg-[#484848]" />
      {label}
    </label>
  );
}

function TinySpin() {
  return <span className="flex h-[10px] w-[6px] flex-col justify-center gap-[3px]"><Caret className="rotate-180" /><Caret /></span>;
}

function SelectionRollout() {
  return (
    <div className="mx-[2px] mb-[3px] flex h-[143px] shrink-0 flex-col border-x border-b border-[#2a2a2a] px-[3px]">
      <div className="mt-px flex h-[16px] items-center gap-[6px] pl-[9px]">
        <button aria-label="顶点" className="h-[12px] w-[9px]"><svg viewBox="0 0 9 12" className="h-[12px] w-[9px]" fill="#c01010"><path d="M3 2h2v2H3zM0 6h2v2H0zM6 8h2v2H6z" /></svg></button>
        <button aria-label="边" className="h-[15px] w-[15px] bg-[#fff200]"><svg viewBox="0 0 15 15" className="h-[15px] w-[15px]" fill="none"><path d="M3 11l9-8-2 8z" stroke="#e02b10" strokeWidth="1.5" /></svg></button>
        <button aria-label="边界" className="h-[12px] w-[9px]"><svg viewBox="0 0 9 12" className="h-[12px] w-[9px]" fill="none"><path d="M2 3c2-3 5-2 5 2s-2 7-5 5" stroke="#c01010" strokeWidth="1.3" /></svg></button>
        <button aria-label="多边形" className="h-[9px] w-[9px] border border-[#5c0000] bg-[#f20505]" />
        <button aria-label="元素" className="h-[10px] w-[10px]"><svg viewBox="0 0 10 10" className="h-[10px] w-[10px]"><path d="M0 4l3-3h6L7 4z" fill="#ff5151" /><path d="M0 4h7v5H0z" fill="#e30808" /><path d="M7 4l2-3v5L7 9z" fill="#6c1180" /></svg></button>
      </div>
      <div className="mt-[4px] flex flex-col gap-[5px]">
        <Check label="按顶点" />
        <Check label="忽略背面" />
        <div className="flex items-center justify-between">
          <Check label="按角度:" disabled />
          <input aria-label="角度" disabled defaultValue="45.0" className="ml-auto h-[10px] w-[45px] border border-[#222] bg-[#4c4c4c] pl-[1px] text-[#1c1c1c]" />
          <TinySpin />
        </div>
      </div>
      <div className="mt-px grid grid-cols-2 gap-[3px]">
        <button className={smallButton}>收缩</button>
        <button className={smallButton}>扩大</button>
        <span className="flex items-center gap-[3px]"><button className={`${smallButton} flex-1`}>环形</button><TinySpin /></span>
        <span className="flex items-center gap-[3px]"><button className={`${smallButton} flex-1`}>循环</button><TinySpin /></span>
      </div>
      <fieldset className="-mx-[2px] mt-[3px] h-[26px] border border-[#292929]">
        <legend className="ml-[4px]">预览选择</legend>
        <div className="flex justify-between pt-[3px]">
          {['禁用', '子对象', '多个'].map((name, i) => (
            <label key={name} className="flex items-center gap-[4px] whitespace-nowrap">
              <input type="radio" name="preview" defaultChecked={i === 0} className="h-[7px] w-[7px] appearance-none rounded-full border border-[#222] bg-[#333] checked:border-2 checked:bg-white" />
              {name}
            </label>
          ))}
        </div>
      </fieldset>
      <p className="mt-[4px] text-right">选择了 3521 个边</p>
    </div>
  );
}

function EditEdgesRollout() {
  return (
    <div className="mx-[4px] mt-[5px] grid shrink-0 grid-cols-2 gap-[3px]">
      <button className={`${smallButton} col-span-2`}>插入顶点</button>
      <button className={smallButton}>移除</button>
      <button className={smallButton}>分割</button>
      {['挤出', '焊接', '切角'].map((name) => (
        <span key={name} className="flex gap-px">
          <button className={`${smallButton} flex-1`}>{name}</button>
          <button aria-label={`${name}设置`} className={`${smallButton} flex w-[10px] items-center justify-center`}><Box className="text-black" /></button>
        </span>
      ))}
      <button className={smallButton}>目标焊接</button>
      <button className={smallButton}>桥</button>
      <button className={smallButton}>连接</button>
    </div>
  );
}

/* ---------- status bar ---------- */

const statusField = 'flex h-[14px] items-center border border-[#2c2c2c] bg-[#474747] pl-[3px] whitespace-nowrap';

function TransportIcon({ label, d }: { label: string; d: string }) {
  return (
    <button aria-label={label}>
      <svg viewBox="0 0 14 10" className="h-[10px] w-[13px]" fill="#e2e2e2" stroke="#e2e2e2" strokeWidth=".6"><path d={d} /></svg>
    </button>
  );
}

function StatusBar() {
  return (
    <footer className="flex h-[33px] shrink-0 bg-[#444]">
      <div className="flex w-[66px] flex-col gap-px border-r border-[#222] py-[2px] pl-[2px]">
        <div className="h-[14px] bg-[#dcc2c4]" />
        <div className="flex h-[15px] items-center overflow-hidden whitespace-nowrap bg-white pl-[3px] font-['Liberation_Mono','Noto_Sans_CJK_SC',monospace] text-black">欢迎使用 MAXSc</div>
      </div>
      <div className="ml-[5px] flex min-w-0 flex-1 flex-col gap-[2px] pt-[3px]">
        <div className="flex items-center">
          <div className={`${statusField} flex-1`}>选择了 1 个 对象</div>
          <MapPin className="ml-[4px] h-[11px] w-[11px] fill-[#e88] text-[#e88]" />
          <Lock className="ml-[6px] h-[10px] w-[10px] fill-[#ddc48c] text-[#ddd]" />
          <svg viewBox="0 0 10 10" className="ml-[7px] mr-[4px] h-[10px] w-[10px]"><path d="M0 0h10v10H0z" fill="#eee" /><circle cx="5" cy="5" r="3" fill="none" stroke="#333" /><path d="M5 0v3M5 7v3M0 5h3M7 5h3" stroke="#333" /></svg>
          {[['X:', '-5491.014m'], ['Y:', '-17524.653'], ['Z:', '0.0mm']].map(([axis, value]) => (
            <label key={axis} className="mr-[9px] flex items-center gap-px">
              {axis}
              <input defaultValue={value} className="h-[13px] w-[37px] border border-[#222] bg-[#595959] pl-[1px] text-[#1d1d1d]" />
            </label>
          ))}
          <div className={`${statusField} w-[66px]`}>栅格 = 10.0mm</div>
        </div>
        <div className="flex items-center">
          <div className={`${statusField} flex-1`}>单击或单击并拖动以选择对象</div>
          <button aria-label="自适应降级" className="mx-[2px] flex h-[14px] w-[14px] items-center justify-center border border-[#1f4f8d] bg-[#3b7ed6]">
            <svg viewBox="0 0 10 10" className="h-[10px] w-[10px]" fill="#e8e8e8" stroke="#555"><path d="M1 3l2-2h6v6L7 9H1zM1 3h6v6" /></svg>
          </button>
          <div className={`${statusField} w-[66px]`}>添加时间标记</div>
        </div>
      </div>
      <button aria-label="设置关键点" className="mx-[2px] flex w-[28px] items-center justify-center border border-[#2d2d2d]">
        <Key className="h-[16px] w-[16px] rotate-45 text-black" />
      </button>
      <div className="flex w-[120px] flex-col gap-[2px] pt-[3px]">
        <div className="flex items-center justify-between">
          <button className={`${smallButton} h-[14px] w-[43px]`}>自动关键点</button>
          <Combo label="关键点集" value="选定对象" className="w-[74px]" />
        </div>
        <div className="flex items-center">
          <button className={`${smallButton} h-[14px] w-[43px]`}>设置关键点</button>
          <svg viewBox="0 0 12 12" className="mx-[3px] h-[12px] w-[12px]"><path d="M1 1l10 10" stroke="#d78a84" strokeWidth="1.5" /></svg>
          <button className={`${smallButton} h-[14px] flex-1 whitespace-nowrap`}>关键点过滤器...</button>
        </div>
      </div>
      <div className="flex w-[152px] flex-col gap-[3px] pl-[8px] pr-[2px] pt-[4px]">
        <div className="flex items-center justify-between">
          <TransportIcon label="转至开头" d="M1 1v8M8 1L3 5l5 4zM13 1L8 5l5 4z" />
          <TransportIcon label="上一帧" d="M7 1L1 5l6 4zM9 2v6M11 2v6M13 2v6" />
          <TransportIcon label="播放" d="M3 1l8 4-8 4z" />
          <TransportIcon label="下一帧" d="M7 1l6 4-6 4zM1 2v6M3 2v6M5 2v6" />
          <TransportIcon label="转至结尾" d="M13 1v8M6 1l5 4-5 4zM1 1l5 4-5 4z" />
          <TransportIcon label="缩放" d="M3 3a3 3 0 106 0 3 3 0 10-6 0M7 6l3 4M11 2h3M12 0v3" />
          <TransportIcon label="缩放所有视图" d="M2 0h4v4H2zM8 0h4v4H8zM2 6h4v4H2zM8 6h4v4H8z" />
          <svg viewBox="0 0 12 12" className="h-[12px] w-[12px]" fill="none"><path d="M1 4V1h3M8 1h3v3M11 8v3H8M4 11H1V8" stroke="#e2e2e2" /><path d="M4 4h4v4H4z" fill="#65b04e" /></svg>
          <svg viewBox="0 0 12 12" className="h-[12px] w-[12px]"><path d="M4 1h3v4H4zM8 1h3v4H8zM8 6h3v5H8z" fill="#ddd" /><path d="M1 5h5v6H1z" fill="#65b04e" /></svg>
        </div>
        <div className="flex items-center justify-between">
          <TransportIcon label="关键点模式" d="M1 1v8M13 1v8M6 2L2 5l4 3zM8 2l4 3-4 3z" />
          <Spinner label="当前帧" value="0" className="w-[50px]" />
          <svg viewBox="0 0 12 12" className="h-[11px] w-[11px]"><path d="M0 1h8v9H0z" fill="#e3e8ee" /><path d="M0 1h8v3H0z" fill="#3b7ed6" /><circle cx="8" cy="8" r="3.5" fill="#9fc2ea" stroke="#fff" /></svg>
          <svg viewBox="0 0 12 12" className="h-[11px] w-[11px]" fill="none" stroke="#e2e2e2"><path d="M1 1h8v8H1z" strokeDasharray="2 1" /></svg>
          <svg viewBox="0 0 12 12" className="h-[12px] w-[12px]" fill="none" stroke="#eee" strokeWidth="1.5"><path d="M2 4l3 7h4l2-6M4 7V2M6 7V1M8 7V2" /></svg>
          <svg viewBox="0 0 12 12" className="h-[12px] w-[12px]" fill="none"><path d="M1 6c2-4 8-4 9 0s-5 5-7 3M5 1v5" stroke="#ddd" /><circle cx="6" cy="7" r="2" fill="#65b04e" /></svg>
          <svg viewBox="0 0 12 12" className="h-[11px] w-[11px]"><path d="M1 1h10v10H1z" fill="#e5e5e5" /><path d="M3 3l6 6M3 7V3h4" stroke="#222" fill="none" /></svg>
        </div>
      </div>
    </footer>
  );
}

const tasks = ['#dfe6ea', '#5aa9e0', '#3aa0e0', '#3aa0e0', '#3aa0e0', '#8cd3e0', '#d050e8', '#c050e8', '#333', '#efd868'];

function Taskbar() {
  return (
    <div className="-mx-[5px] flex h-[6px] shrink-0 gap-px overflow-hidden bg-[#101a26] pl-[3px]">
      <div className="h-[20px] w-[20px] shrink-0 rounded-full bg-linear-to-r from-[#e0673c] via-[#9cc46c] to-[#3d7fc0]" />
      <div className="flex w-[64px] shrink-0 items-end justify-around">
        <span className="h-[5px] w-[9px] rounded-t-full bg-[#a7cf3c]" />
        <span className="h-[5px] w-[10px] bg-[#2a2e88]" />
      </div>
      {tasks.map((color, i) => (
        <div key={i} className="flex flex-1 items-end border-t border-[#9aa6b2] bg-linear-to-r from-[#9aa5b0] to-[#4a5561] pl-[6px]">
          <span className="h-[4px] w-[9px] rounded-t-full" style={{ backgroundColor: color }} />
        </div>
      ))}
    </div>
  );
}

/* ---------- quad menu ---------- */

interface QuadItem {
  label: ReactNode;
  line?: boolean;
  box?: boolean;
  arrow?: boolean;
  check?: boolean;
  tone?: string;
}

const latin = (text: string) => <i>{text}</i>;

const toolsTop: QuadItem[] = [
  { label: <span className="whitespace-pre">{latin('NURMS')} 切换</span> },
  { label: '忽略背面' },
  { label: '塌陷', line: true, tone: 'text-[#1b2d42]' },
  { label: '附加', box: true },
  { label: '剪切', line: true },
  { label: '快速切片' },
  { label: '重复', line: true },
  { label: '转换到面', line: true },
  { label: '转换到顶点' },
  { label: latin('Smooth') },
  { label: '元素', line: true },
  { label: '多边形' },
  { label: '边界' },
  { label: '边', check: true },
  { label: '顶点' },
  { label: '顶层级' },
];

const toolsBottom: QuadItem[] = [
  { label: '创建' },
  { label: '删除', line: true },
  { label: '分割', line: true, tone: 'bg-[#353535] text-white' },
  { label: '连接', line: true, box: true },
  { label: '插入顶点' },
  { label: '挤出', line: true, box: true },
  { label: '切角', box: true },
  { label: '焊接', line: true, box: true },
  { label: '目标焊接' },
  { label: '编辑三角剖分', line: true },
  { label: '创建图形' },
];

const displayTop: QuadItem[] = [
  { label: '视口照明和阴影', arrow: true },
  { label: '孤立当前选择', line: true },
  { label: '全部解冻', line: true },
  { label: '冻结当前选择' },
  { label: '按名称取消隐藏', line: true },
  { label: '全部取消隐藏' },
  { label: '隐藏未选定对象', tone: 'text-[#1b2d42]' },
  { label: '隐藏选定对象' },
];

const missing = (name: string): QuadItem => ({ label: <>缺少: {latin(name)}</>, tone: 'text-[#6a6a6a]' });

const transform: QuadItem[] = [
  { label: '移动', box: true },
  { label: '旋转', box: true },
  { label: '缩放', box: true },
  { label: '选择' },
  { label: <>选择类似对象<i>(<u>S</u>)</i></>, tone: 'text-[#777]' },
  { label: <>克隆<i>(<u>C</u>)</i></>, line: true },
  { label: <>对象属性<i>(<u>P</u>)</i>...</>, line: true },
  { label: '曲线编辑器...', line: true },
  { label: '摄影表...' },
  { label: '关联参数...' },
  { label: '转换为:', line: true, arrow: true },
  missing('vrayProperties`VRay'),
  missing('VRaySceneConverter`VRay'),
  missing('vrayMeshExport`VRay'),
  missing('vrayShowVFB`VRay'),
  missing('vrsceneExport`VRay'),
  missing('vrsceneExportAnim`VRay'),
];

function Box({ className = 'text-[#222]' }: { className?: string }) {
  return (
    <svg viewBox="0 0 8 8" className={`h-[8px] w-[8px] shrink-0 ${className}`} fill="none" stroke="currentColor">
      <path d="M.5 .5h7v7h-7zM0 1.5h8" />
    </svg>
  );
}

function Quad({ items, side }: { items: QuadItem[]; side: 'left' | 'right' }) {
  return (
    <ul className="bg-[#d8d8d8]">
      {items.map((item, i) => (
        <li key={i} className={item.line ? 'border-t border-[#3a3a3a]' : ''}>
          <button
            className={`flex w-full items-center gap-[4px] whitespace-nowrap ${item.line ? 'h-[15px]' : 'h-[16px]'} ${
              side === 'left' ? 'flex-row-reverse justify-between pl-[3px] pr-px' : 'justify-between pl-[12px] pr-[2px]'
            } ${item.tone ?? 'text-[#0c0c0c]'}`}
          >
            <span className={side === 'left' ? 'flex items-center' : ''}>
              {item.label}
              {side === 'left' && (
                <svg viewBox="0 0 10 8" className="h-[8px] w-[10px]" fill="none">
                  {item.check && <path d="M5 4l2 3 3-6" stroke="#111" strokeWidth="1.3" />}
                </svg>
              )}
            </span>
            {item.box && <Box />}
            {item.arrow && <svg viewBox="0 0 8 8" className="h-[8px] w-[8px]"><path d="M0 0l4 4-4 4z" fill="#000" /></svg>}
          </button>
        </li>
      ))}
    </ul>
  );
}

function QuadMenu() {
  return (
    <div className="absolute left-[403px] top-[60px] z-10 grid w-[376px] grid-cols-2 items-start text-[11px] font-bold">
      <div className="border border-[#2b2b2b] bg-[#d8d8d8]">
        <div className="pt-px" />
        <Quad items={toolsTop} side="left" />
        <h4 className="flex h-[12px] items-center border-b border-black bg-[#383838] pl-[2px] text-[8px] text-white">工具 1</h4>
        <h4 className="flex h-[10px] items-center bg-[#383838] pl-[2px] text-[8px] text-white">立方建模</h4>
        <Quad items={toolsBottom} side="left" />
        <div className="pt-px" />
      </div>
      <div className="-ml-px mt-[129px] border border-[#2b2b2b] bg-[#d8d8d8]">
        <Quad items={displayTop} side="right" />
        <h4 className="flex h-[12px] items-center justify-end border-b border-black bg-[#383838] pr-[2px] text-[8px] text-white">扮家家特训营</h4>
        <h4 className="flex h-[10px] items-center justify-end bg-[#383838] pr-[2px] text-[8px] text-white">banjiajia.com</h4>
        <Quad items={transform} side="right" />
      </div>
      <div className="pointer-events-none absolute left-[-28px] top-[271px] flex items-center gap-[7px] font-normal text-white/90">
        <svg viewBox="0 0 30 32" className="h-[32px] w-[30px]">
          <path d="M2 4l13-4 13 4-12 5z" fill="#55585a" />
          <path d="M1 6l13 6v18L3 23z" fill="#16aeca" />
          <path d="M30 6l-14 6v18l12-9z" fill="#7ccbb4" />
        </svg>
        <div className="whitespace-nowrap">
          <p className="text-[16px] leading-[16px]">扮家家室内设计</p>
          <p className="text-[11px] leading-[10px]">banjiajia.com</p>
        </div>
      </div>
    </div>
  );
}

function Arrow() {
  return (
    <svg viewBox="0 0 230 36" className="pointer-events-none absolute left-[582px] top-[376px] z-20 h-[36px] w-[230px]">
      <path d="M0 6L14 0L13 4L228 35L13 10L12 13Z" fill="#fa3a38" />
    </svg>
  );
}
